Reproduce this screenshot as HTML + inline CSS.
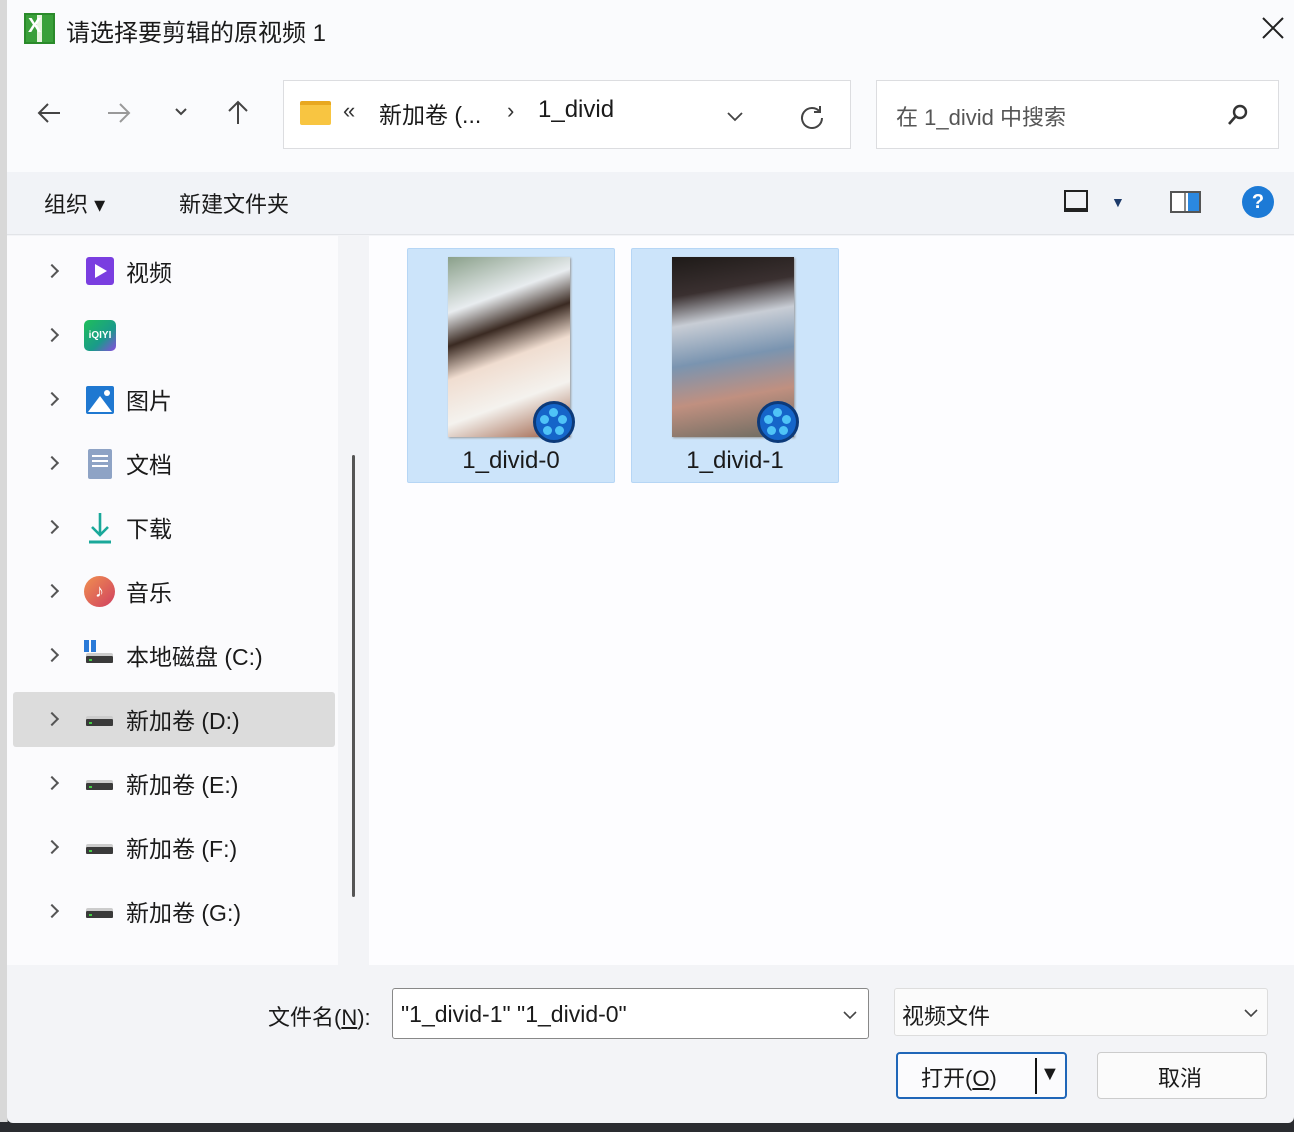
<!DOCTYPE html>
<html><head><meta charset="utf-8"><style>
*{margin:0;padding:0;box-sizing:border-box}
body{width:1294px;height:1132px;overflow:hidden;background:#2a2c30;font-family:"Liberation Sans","Noto Sans CJK SC",sans-serif;color:#1a1a1a;position:relative}
.abs{position:absolute}
#left{left:0;top:0;width:8px;height:1122px;background:#d8d8d8;border-right:1px solid #999}
#dlg{left:7px;top:0;width:1287px;height:1123px;background:#f3f4f7;border-radius:0 0 6px 6px}
.t{position:absolute;white-space:nowrap}
.row .t{font-size:23px;left:126px}
.chev{position:absolute;left:47px;width:10px;height:10px;border-right:2px solid #555;border-top:2px solid #555;transform:rotate(45deg)}
.drive{position:absolute;left:86px;width:27px;height:7px;background:#3a3a3a;border-radius:1px}
.drive:before{content:"";position:absolute;left:0;top:-3px;width:27px;height:3px;background:#ccc;border-radius:2px 2px 0 0}
.drive:after{content:"";position:absolute;left:3px;top:3px;width:3px;height:2px;background:#4c4}
.tile{position:absolute;top:248px;width:208px;height:235px;background:#cce4fa;border:1px solid #b6d6f5;border-radius:2px}
.thumb{position:absolute;left:40px;top:8px;width:122px;height:180px;box-shadow:1px 1px 2px #999}
.badge{position:absolute;left:125px;top:152px;width:42px;height:42px;border-radius:50%;background:#1565c9;border:3px solid #0c3a7a}
.badge i{position:absolute;width:9px;height:9px;border-radius:50%;background:#4fc3f7}
.lbl{position:absolute;top:198px;width:100%;text-align:center;font-size:24px}
</style></head><body>
<div class="abs" id="left"></div>
<div class="abs" id="dlg">
 <div class="abs" style="left:0;top:0;width:1287px;height:62px;background:#fafbfd"></div>
 <div class="abs" style="left:17px;top:13px;width:31px;height:31px;background:#3aa03a;border:2px solid #2a8a2a"><div class="abs" style="left:11px;top:0;width:5px;height:27px;background:#e8f5e0"></div><div class="t" style="left:2px;top:0;color:#fff;font-size:20px;font-weight:bold">X</div></div>
 <div class="t" style="left:59px;top:13px;font-size:24px">请选择要剪辑的原视频 1</div>
 <svg class="abs" style="left:1255px;top:17px" width="22" height="22"><path d="M1 1L21 21M21 1L1 21" stroke="#222" stroke-width="2"/></svg>
 <div class="abs" style="left:0;top:62px;width:1287px;height:110px;background:#fafbfd"></div>
 <svg class="abs" style="left:29px;top:101px" width="26" height="24"><path d="M24 12H3M12 3L3 12L12 21" fill="none" stroke="#444" stroke-width="2"/></svg>
 <svg class="abs" style="left:99px;top:101px" width="26" height="24"><path d="M2 12H23M14 3L23 12L14 21" fill="none" stroke="#999" stroke-width="2"/></svg>
 <svg class="abs" style="left:167px;top:107px" width="14" height="10"><path d="M2 2L7 7L12 2" fill="none" stroke="#444" stroke-width="2"/></svg>
 <svg class="abs" style="left:219px;top:99px" width="24" height="26"><path d="M12 25V3M3 12L12 3L21 12" fill="none" stroke="#444" stroke-width="2"/></svg>
 <div class="abs" style="left:276px;top:80px;width:568px;height:69px;background:#fff;border:1px solid #dcdde0"></div>
 <div class="abs" style="left:293px;top:101px;width:31px;height:24px;background:#f8c541;border-radius:2px;border-top:4px solid #e8a820"></div>
 <div class="t" style="left:336px;top:98px;font-size:22px;color:#333">«</div>
 <div class="t" style="left:372px;top:96px;font-size:23px">新加卷 (...</div>
 <div class="t" style="left:500px;top:98px;font-size:22px;color:#333">›</div>
 <div class="t" style="left:531px;top:96px;font-size:24px">1_divid</div>
 <svg class="abs" style="left:719px;top:111px" width="18" height="12"><path d="M2 2L9 9L16 2" fill="none" stroke="#444" stroke-width="1.8"/></svg>
 <svg class="abs" style="left:792px;top:104px" width="26" height="26"><path d="M21 8A10 10 0 1 0 23 14M21 2V8H15" fill="none" stroke="#444" stroke-width="2"/></svg>
 <div class="abs" style="left:869px;top:80px;width:403px;height:69px;background:#fff;border:1px solid #dcdde0"></div>
 <div class="t" style="left:889px;top:100px;font-size:22px;color:#555">在 1_divid 中搜索</div>
 <svg class="abs" style="left:1219px;top:103px" width="24" height="24"><circle cx="14" cy="9" r="6" fill="none" stroke="#333" stroke-width="2.4"/><line x1="10" y1="13" x2="3" y2="21" stroke="#333" stroke-width="2.6"/></svg>
 <div class="abs" style="left:0;top:172px;width:1287px;height:63px;background:#f1f3f7;border-bottom:1px solid #e2e4e8"></div>
 <div class="t" style="left:37px;top:187px;font-size:22px">组织 ▾</div>
 <div class="t" style="left:172px;top:187px;font-size:22px">新建文件夹</div>
 <div class="abs" style="left:1057px;top:190px;width:24px;height:22px;border:2px solid #222;border-bottom-width:4px"></div>
 <div class="t" style="left:1104px;top:194px;font-size:14px;color:#1d3a6a">▼</div>
 <div class="abs" style="left:1163px;top:191px;width:31px;height:22px;border:2px solid #555;background:linear-gradient(90deg,#fff 0 45%,#888 45% 52%,#fff 52% 60%,#2b88e0 60%)"></div>
 <div class="abs" style="left:1235px;top:186px;width:32px;height:32px;border-radius:50%;background:#1c7ad6;color:#fff;font-weight:bold;font-size:20px;text-align:center;line-height:32px">?</div>
 <div class="abs" style="left:0;top:236px;width:331px;height:729px;background:#fbfbfd"></div>
 <div class="abs" style="left:345px;top:455px;width:3px;height:442px;background:#555;border-radius:2px"></div>
 <div class="abs" style="left:362px;top:236px;width:925px;height:729px;background:#fdfdff"></div>
 <div class="abs" style="left:6px;top:692px;width:322px;height:55px;background:#dcdcdc;border-radius:3px"></div>
</div>
<div class="row">
 <div class="chev" style="top:266px"></div><div class="abs" style="left:86px;top:257px;width:28px;height:28px;background:#7a3ee0;border-radius:3px"><div class="abs" style="left:9px;top:7px;border-left:12px solid #fff;border-top:7px solid transparent;border-bottom:7px solid transparent"></div></div><div class="t" style="top:254px">视频</div>
 <div class="chev" style="top:330px"></div><div class="abs" style="left:84px;top:320px;width:32px;height:31px;background:linear-gradient(135deg,#1fbf5a,#1a9a8a 60%,#8a4ae0);border-radius:5px;color:#fff;font-size:10px;font-weight:bold;text-align:center;line-height:31px">iQIYI</div>
 <div class="chev" style="top:394px"></div><div class="abs" style="left:86px;top:386px;width:28px;height:28px;background:#1f78d1;border-radius:2px"><div class="abs" style="left:2px;top:10px;border-bottom:16px solid #fff;border-left:12px solid transparent;border-right:12px solid transparent"></div><div class="abs" style="left:18px;top:4px;width:6px;height:6px;border-radius:50%;background:#fff"></div></div><div class="t" style="top:382px">图片</div>
 <div class="chev" style="top:458px"></div><div class="abs" style="left:88px;top:449px;width:24px;height:30px;background:#8ea3c5;border-radius:2px"><div class="abs" style="left:4px;top:6px;width:16px;height:14px;background:repeating-linear-gradient(#fff 0 2px,transparent 2px 5px)"></div></div><div class="t" style="top:446px">文档</div>
 <div class="chev" style="top:522px"></div><svg class="abs" style="left:87px;top:511px" width="26" height="34"><path d="M13 2V24M5 16L13 24L21 16" fill="none" stroke="#1aa89a" stroke-width="2.6"/><path d="M2 31H24" stroke="#1aa89a" stroke-width="3"/></svg><div class="t" style="top:510px">下载</div>
 <div class="chev" style="top:586px"></div><div class="abs" style="left:84px;top:576px;width:31px;height:31px;border-radius:50%;background:linear-gradient(135deg,#f09050,#d04060);color:#fff;text-align:center;line-height:31px;font-size:18px">♪</div><div class="t" style="top:574px">音乐</div>
 <div class="chev" style="top:650px"></div><div class="abs" style="left:84px;top:640px;width:12px;height:12px;background:repeating-linear-gradient(90deg,#2a7ad8 0 5px,transparent 5px 7px)"></div><div class="drive" style="top:656px"></div><div class="t" style="top:638px">本地磁盘 (C:)</div>
 <div class="chev" style="top:714px"></div><div class="drive" style="top:719px"></div><div class="t" style="top:702px">新加卷 (D:)</div>
 <div class="chev" style="top:778px"></div><div class="drive" style="top:783px"></div><div class="t" style="top:766px">新加卷 (E:)</div>
 <div class="chev" style="top:842px"></div><div class="drive" style="top:847px"></div><div class="t" style="top:830px">新加卷 (F:)</div>
 <div class="chev" style="top:906px"></div><div class="drive" style="top:911px"></div><div class="t" style="top:894px">新加卷 (G:)</div>
</div>
<div class="tile" style="left:407px">
 <div class="thumb" style="background:linear-gradient(160deg,#8aa08a 0%,#e8ecef 25%,#3a2a22 40%,#f0ddd0 55%,#f4f2ee 75%,#9a5a40 100%)"></div>
 <div class="badge"><i style="left:13px;top:4px"></i><i style="left:4px;top:11px"></i><i style="left:22px;top:11px"></i><i style="left:7px;top:22px"></i><i style="left:19px;top:22px"></i></div>
 <div class="lbl">1_divid-0</div>
</div>
<div class="tile" style="left:631px">
 <div class="thumb" style="background:linear-gradient(170deg,#1e1a18 0%,#3a3030 20%,#c8cdd5 35%,#7a94b0 55%,#c09080 75%,#6a6a60 100%)"></div>
 <div class="badge"><i style="left:13px;top:4px"></i><i style="left:4px;top:11px"></i><i style="left:22px;top:11px"></i><i style="left:7px;top:22px"></i><i style="left:19px;top:22px"></i></div>
 <div class="lbl">1_divid-1</div>
</div>
<div class="t" style="left:268px;top:1000px;font-size:22px">文件名(<u>N</u>):</div>
<div class="abs" style="left:392px;top:988px;width:477px;height:51px;background:#fff;border:1px solid #888;border-radius:3px"></div>
<div class="t" style="left:401px;top:1001px;font-size:23px">"1_divid-1" "1_divid-0"</div>
<svg class="abs" style="left:842px;top:1010px" width="16" height="10"><path d="M2 2L8 8L14 2" fill="none" stroke="#444" stroke-width="1.6"/></svg>
<div class="abs" style="left:894px;top:988px;width:374px;height:48px;background:#fbfbfb;border:1px solid #ddd;border-radius:3px"></div>
<div class="t" style="left:902px;top:999px;font-size:22px">视频文件</div>
<svg class="abs" style="left:1243px;top:1008px" width="16" height="10"><path d="M2 2L8 8L14 2" fill="none" stroke="#444" stroke-width="1.6"/></svg>
<div class="abs" style="left:896px;top:1052px;width:171px;height:47px;background:#fbfbfd;border:2px solid #1f66b8;border-radius:4px"></div>
<div class="t" style="left:921px;top:1061px;font-size:22px">打开(<u>O</u>)</div>
<div class="abs" style="left:1035px;top:1058px;width:2px;height:36px;background:#111"></div>
<div class="t" style="left:1040px;top:1063px;font-size:20px">▼</div>
<div class="abs" style="left:1097px;top:1052px;width:170px;height:47px;background:#fbfbfb;border:1px solid #ccc;border-radius:4px"></div>
<div class="t" style="left:1158px;top:1061px;font-size:22px">取消</div>
</body></html>
